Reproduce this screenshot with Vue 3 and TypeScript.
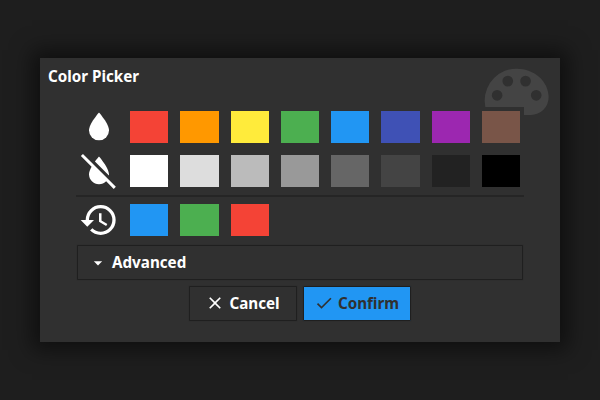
<script setup lang="ts">
interface PaletteRow {
  name: string
  paths: string[]
  colors: string[]
}

const rows: PaletteRow[] = [
  {
    name: 'colors',
    paths: ['M12,20A6,6 0 0,1 6,14C6,10 12,3.25 12,3.25C12,3.25 18,10 18,14A6,6 0 0,1 12,20Z'],
    colors: ['#f44336', '#ff9800', '#ffeb3b', '#4caf50', '#2196f3', '#3f51b5', '#9c27b0', '#795548'],
  },
  {
    name: 'grays',
    paths: [
      'M20.84 22.73L16.29 18.18C15.2 19.3 13.69 20 12 20C8.69 20 6 17.31 6 14C6 12.67 6.67 11.03 7.55 9.44L1.11 3L2.39 1.73L22.11 21.46L20.84 22.73M18 14C18 10 12 3.25 12 3.25C12 3.25 10.84 4.55 9.55 6.35L17.95 14.75C17.98 14.5 18 14.25 18 14Z',
    ],
    colors: ['#ffffff', '#dddddd', '#bbbbbb', '#999999', '#666666', '#444444', '#222222', '#000000'],
  },
]

const historyRow: PaletteRow = {
  name: 'history',
  paths: [
    'M13.5,8H12V13L16.28,15.54L17,14.33L13.5,12.25V8M13,3A9,9 0 0,0 4,12H1L4.96,16.03L9,12H6A7,7 0 0,1 13,5A7,7 0 0,1 20,12A7,7 0 0,1 13,19C11.07,19 9.32,18.21 8.06,16.94L6.64,18.36C8.27,20 10.5,21 13,21A9,9 0 0,0 22,12A9,9 0 0,0 13,3',
  ],
  colors: ['#2196f3', '#4caf50', '#f44336'],
}
</script>

<template>
  <main class="backdrop">
    <section class="dialog">
      <svg class="watermark" viewBox="0 0 24 24" aria-hidden="true">
        <path
          d="M17.5,12A1.5,1.5 0 0,1 16,10.5A1.5,1.5 0 0,1 17.5,9A1.5,1.5 0 0,1 19,10.5A1.5,1.5 0 0,1 17.5,12M14.5,8A1.5,1.5 0 0,1 13,6.5A1.5,1.5 0 0,1 14.5,5A1.5,1.5 0 0,1 16,6.5A1.5,1.5 0 0,1 14.5,8M9.5,8A1.5,1.5 0 0,1 8,6.5A1.5,1.5 0 0,1 9.5,5A1.5,1.5 0 0,1 11,6.5A1.5,1.5 0 0,1 9.5,8M6.5,12A1.5,1.5 0 0,1 5,10.5A1.5,1.5 0 0,1 6.5,9A1.5,1.5 0 0,1 8,10.5A1.5,1.5 0 0,1 6.5,12M12,3A9,9 0 0,0 3,12A9,9 0 0,0 12,21A1.5,1.5 0 0,0 13.5,19.5C13.5,19.11 13.35,18.76 13.11,18.5C12.88,18.23 12.73,17.88 12.73,17.5A1.5,1.5 0 0,1 14.23,16H16A5,5 0 0,0 21,11C21,6.58 16.97,3 12,3Z"
        />
      </svg>
      <h1 class="title">Color Picker</h1>
      <div class="body">
        <div v-for="row in rows" :key="row.name" class="row">
          <svg class="row-icon" viewBox="0 0 24 24">
            <path v-for="p in row.paths" :key="p" :d="p" />
          </svg>
          <button v-for="c in row.colors" :key="c" class="swatch" :style="{ background: c }" />
        </div>
        <div class="divider" />
        <div class="row">
          <svg class="row-icon" viewBox="0 0 24 24">
            <path v-for="p in historyRow.paths" :key="p" :d="p" />
          </svg>
          <button v-for="c in historyRow.colors" :key="c" class="swatch" :style="{ background: c }" />
        </div>
        <button class="advanced">
          <svg class="caret" viewBox="0 0 24 24"><path d="M7,10L12,15L17,10H7Z" /></svg>
          <span>Advanced</span>
        </button>
        <footer class="actions">
          <button class="action">
            <svg class="action-icon" viewBox="0 0 24 24">
              <path d="M19,6.41L17.59,5L12,10.59L6.41,5L5,6.41L10.59,12L5,17.59L6.41,19L12,13.41L17.59,19L19,17.59L13.41,12L19,6.41Z" />
            </svg>
            <span>Cancel</span>
          </button>
          <button class="action primary">
            <svg class="action-icon" viewBox="0 0 24 24">
              <path d="M21,7L9,19L3.5,13.5L4.91,12.09L9,16.17L19.59,5.59L21,7Z" />
            </svg>
            <span>Confirm</span>
          </button>
        </footer>
      </div>
    </section>
  </main>
</template>

<style>
body {
  margin: 0;
  background: #1e1e1e;
}
</style>

<style scoped>
.backdrop {
  height: 400px;
  display: flex;
  align-items: center;
  justify-content: center;
  background: #1e1e1e;
  overflow: hidden;
  font-family: "Noto Sans", "Open Sans", sans-serif;
  color: #fff;
}
.dialog {
  position: relative;
  box-sizing: border-box;
  width: 520px;
  height: 284px;
  background: #303030;
  box-shadow: 0 0 20px 8px rgba(0, 0, 0, 0.5);
}
.watermark {
  position: absolute;
  top: 0;
  right: 0.6px;
  width: 85.33px;
  height: 85.33px;
  fill: #444;
}
.title {
  position: relative;
  margin: 0;
  padding: 8px 8px 0;
  height: 41px;
  font-size: 15.2px;
  line-height: 20px;
  font-weight: 700;
}
.body {
  position: relative;
  margin: 0 36px;
  padding-top: 4px;
  background: #303030;
}
.row {
  display: grid;
  grid-template-columns: 42px repeat(8, 38.29px);
  column-gap: 12px;
  height: 32px;
  margin-bottom: 12px;
}
.row-icon {
  width: 40px;
  height: 40px;
  margin: -4px 0 0 3px;
  fill: #fff;
}
button {
  font: inherit;
  color: inherit;
  border: 0;
  padding: 0;
}
.swatch {
  height: 32px;
}
.divider {
  height: 2px;
  margin: -4px 0 7px;
  background: #252525;
}
.advanced {
  display: flex;
  align-items: center;
  box-sizing: border-box;
  width: 446px;
  height: 35px;
  margin: -3px 1px 6px;
  padding-left: 10px;
  border: 1px solid #1f1f1f;
  border-radius: 1px;
  background: #303030;
  box-shadow: 0 0 1px rgba(0, 0, 0, 0.4);
  font-size: 15.2px;
  line-height: 20px;
  font-weight: 700;
}
.caret {
  width: 20px;
  height: 20px;
  margin-right: 4px;
  fill: #fff;
}
.advanced span,
.action span {
  padding-bottom: 1px;
}
.actions {
  display: flex;
  justify-content: center;
  gap: 6px;
}
.action {
  display: flex;
  align-items: center;
  justify-content: center;
  gap: 4px;
  box-sizing: border-box;
  width: 108px;
  height: 35px;
  padding-right: 1px;
  border: 1px solid #1f1f1f;
  border-radius: 1px;
  background: #303030;
  box-shadow: 0 0 1px rgba(0, 0, 0, 0.4);
  font-size: 15.2px;
  line-height: 20px;
  font-weight: 700;
}
.action-icon {
  width: 20px;
  height: 20px;
  margin-top: -1px;
  fill: currentColor;
}
.action.primary {
  background: #2196f3;
  color: #303030;
}
</style>
